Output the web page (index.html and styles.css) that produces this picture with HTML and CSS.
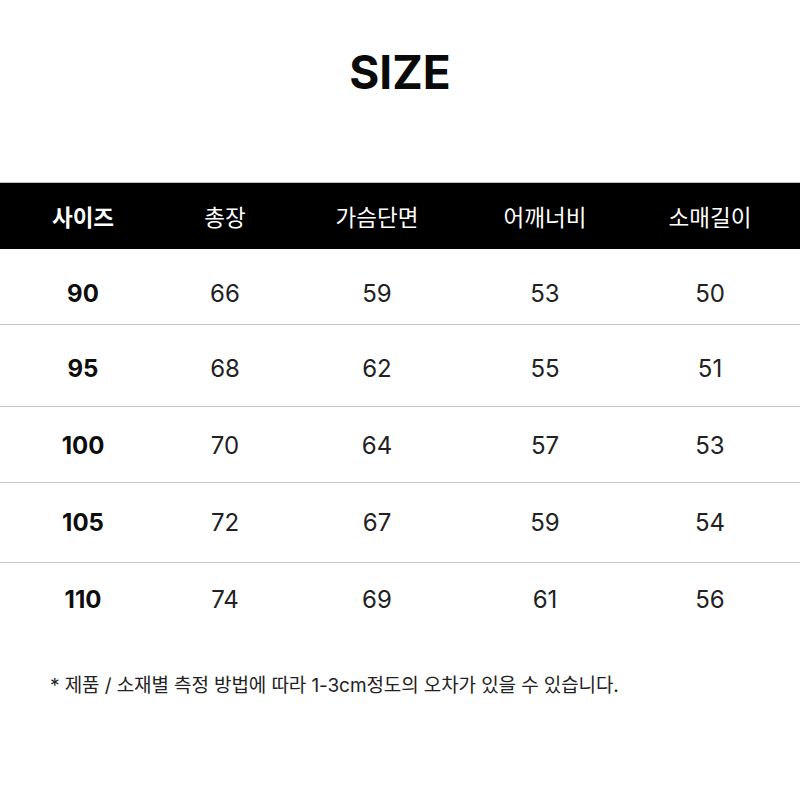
FILE: index.html
```html
<!DOCTYPE html>
<html lang="ko">
<head>
<meta charset="utf-8">
<title>SIZE</title>
<link rel="stylesheet" href="styles.css">
</head>
<body>
<main class="page">
  <h1 class="title">SIZE</h1>
  <table class="size-table">
    <colgroup>
      <col class="c1"><col class="c2"><col class="c3"><col class="c4"><col class="c5">
    </colgroup>
    <thead>
      <tr>
        <th class="key">사이즈</th>
        <th>총장</th>
        <th>가슴단면</th>
        <th>어깨너비</th>
        <th>소매길이</th>
      </tr>
    </thead>
    <tbody>
      <tr><td class="key">90</td><td>66</td><td>59</td><td>53</td><td>50</td></tr>
      <tr><td class="key">95</td><td>68</td><td>62</td><td>55</td><td>51</td></tr>
      <tr><td class="key">100</td><td>70</td><td>64</td><td>57</td><td>53</td></tr>
      <tr><td class="key">105</td><td>72</td><td>67</td><td>59</td><td>54</td></tr>
      <tr><td class="key">110</td><td>74</td><td>69</td><td>61</td><td>56</td></tr>
    </tbody>
  </table>
  <p class="note">* 제품 / 소재별 측정 방법에 따라 1-3cm정도의 오차가 있을 수 있습니다.</p>
</main>
</body>
</html>
```

FILE: styles.css
```css
html, body {
  margin: 0;
  padding: 0;
  background: #ffffff;
}

body {
  font-family: Inter, "Noto Sans CJK KR", sans-serif;
  color: #111;
}

.page {
  width: 800px;
  height: 800px;
  display: flex;
  flex-direction: column;
}

.title {
  margin: 0;
  padding-top: 42px;
  height: 182px;
  flex: none;
  box-sizing: border-box;
  line-height: 60px;
  font-size: 46px;
  font-weight: 700;
  text-align: center;
  color: #0a0a0a;
}

.size-table {
  width: 800px;
  border-collapse: collapse;
  table-layout: fixed;
}

.c1 { width: 166px; }
.c2 { width: 118px; }
.c3 { width: 186px; }
.c4 { width: 150px; }
.c5 { width: 180px; }

.size-table thead tr {
  background: #000;
}

.size-table th {
  height: 66px;
  padding: 0;
  border-top: 1px solid #bdbdbd;
  color: #fff;
  font-size: 22.5px;
  font-weight: 400;
  text-align: center;
  vertical-align: middle;
}

.size-table th.key {
  font-weight: 700;
}

.size-table td {
  height: 75px;
  padding: 0;
  padding-top: 14px;
  box-sizing: border-box;
  font-size: 24px;
  font-weight: 400;
  color: #222;
  text-align: center;
  vertical-align: middle;
  border-bottom: 1px solid #c4c4c4;
}

.size-table tbody tr:nth-child(2) td {
  height: 82px;
  padding-top: 6px;
}

.size-table tbody tr:nth-child(3) td {
  height: 76px;
  padding-top: 2px;
}

.size-table tbody tr:nth-child(4) td {
  height: 80px;
  padding-top: 0;
}

.size-table tbody tr:last-child td {
  border-bottom: none;
  padding-top: 0;
}

.size-table td.key {
  font-weight: 700;
  color: #0d0d0d;
}

.note {
  margin: 37px 0 0 50px;
  line-height: 24px;
  font-size: 19px;
  color: #222;
  letter-spacing: -0.1px;
}
```
